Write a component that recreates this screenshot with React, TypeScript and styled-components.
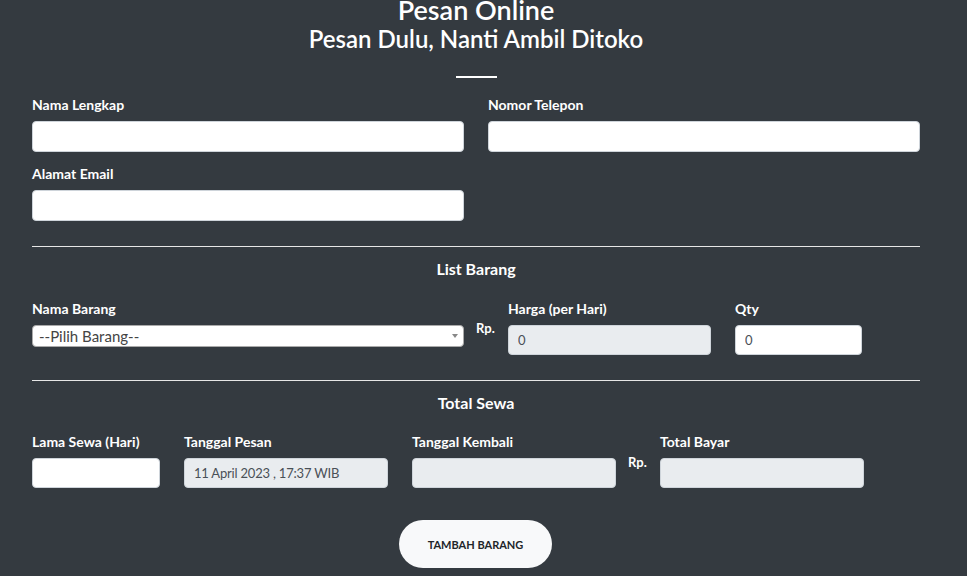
import React from "react";
import styled, { createGlobalStyle } from "styled-components";

const Global = createGlobalStyle`
  html, body { margin: 0; padding: 0; background: #343a40; }
  body { font-family: Lato, "Open Sans", sans-serif; color: #fff; }
  * { box-sizing: border-box; }
`;

const Page = styled.div`
  width: 967px;
  height: 576px;
  overflow: hidden;
  background: #343a40;
  padding-left: 32px;
`;

const Content = styled.div`
  width: 888px;
  display: flex;
  flex-direction: column;
`;

const Header = styled.div`
  display: flex;
  flex-direction: column;
  align-items: center;
  margin-top: -5px;
`;

const Title = styled.h1`
  margin: 0;
  font-size: 27px;
  line-height: 30px;
  font-weight: 600;
`;

const Subtitle = styled.h2`
  margin: 0;
  font-size: 24px;
  line-height: 28px;
  font-weight: 600;
`;

const Underline = styled.div`
  width: 41px;
  height: 2px;
  background: #fff;
  margin-top: 23px;
`;

const Row = styled.div<{ $mt?: number }>`
  display: flex;
  gap: 24px;
  margin-top: ${(p) => p.$mt ?? 0}px;
`;

const Field = styled.div<{ $w: number }>`
  width: ${(p) => p.$w}px;
  display: flex;
  flex-direction: column;
`;

const Label = styled.label`
  font-size: 14px;
  font-weight: 700;
  line-height: 17px;
  height: 17px;
  margin-bottom: 8px;
`;

const Input = styled.input<{ $disabled?: boolean; $h?: number }>`
  width: 100%;
  height: ${(p) => p.$h ?? 31}px;
  border: 1px solid #ced4da;
  border-radius: 4px;
  background: ${(p) => (p.$disabled ? "#e9ecef" : "#fff")};
  font-family: Lato, sans-serif;
  font-size: 13px;
  letter-spacing: -0.2px;
  color: #495057;
  padding: 0 9px;
  outline: none;
`;

const Select = styled.div`
  position: relative;
  width: 100%;
  height: 22px;
  border: 1px solid #aaa;
  border-radius: 4px;
  background: #fff;
  color: #444;
  font-size: 15px;
  line-height: 20px;
  padding-left: 6px;
`;

const Arrow = styled.span`
  position: absolute;
  right: 5px;
  top: 8px;
  width: 0;
  height: 0;
  border-left: 3px solid transparent;
  border-right: 3px solid transparent;
  border-top: 4px solid #888;
`;

const Divider = styled.hr<{ $mt: number }>`
  width: 100%;
  margin: ${(p) => p.$mt}px 0 0;
  border: 0;
  border-top: 1px solid #e6e6e6;
`;

const SectionTitle = styled.h3`
  margin: 12px 0 0;
  text-align: center;
  font-size: 16px;
  font-weight: 700;
  line-height: 20px;
`;

const Rp = styled.div<{ $mt: number }>`
  font-size: 13px;
  font-weight: 700;
  padding-top: ${(p) => p.$mt}px;
  width: 19px;
  margin: 0 -11px 0 -12px;
`;

const ButtonRow = styled.div`
  display: flex;
  justify-content: center;
  margin-top: 32px;
`;

const Button = styled.button`
  width: 153px;
  height: 48px;
  border: none;
  border-radius: 24px;
  background: #f8f9fa;
  color: #212529;
  font-family: Lato, sans-serif;
  font-size: 11px;
  font-weight: 700;
  margin-left: -1px;
`;

export default function App() {
  return (
    <Page>
      <Global />
      <Content>
        <Header>
          <Title>Pesan Online</Title>
          <Subtitle>Pesan Dulu, Nanti Ambil Ditoko</Subtitle>
          <Underline />
        </Header>

        <Row $mt={18}>
          <Field $w={432}>
            <Label>Nama Lengkap</Label>
            <Input />
          </Field>
          <Field $w={432}>
            <Label>Nomor Telepon</Label>
            <Input />
          </Field>
        </Row>
        <Row $mt={13}>
          <Field $w={432}>
            <Label>Alamat Email</Label>
            <Input />
          </Field>
        </Row>

        <Divider $mt={25} />
        <SectionTitle>List Barang</SectionTitle>

        <Row $mt={21}>
          <Field $w={432}>
            <Label>Nama Barang</Label>
            <Select>
              --Pilih Barang--
              <Arrow />
            </Select>
          </Field>
          <Rp $mt={20}>Rp.</Rp>
          <Field $w={203}>
            <Label>Harga (per Hari)</Label>
            <Input $disabled $h={30} value="0" readOnly />
          </Field>
          <Field $w={127}>
            <Label>Qty</Label>
            <Input $h={30} value="0" readOnly />
          </Field>
        </Row>

        <Divider $mt={25} />
        <SectionTitle>Total Sewa</SectionTitle>

        <Row $mt={20}>
          <Field $w={128}>
            <Label>Lama Sewa (Hari)</Label>
            <Input $h={30} />
          </Field>
          <Field $w={204}>
            <Label>Tanggal Pesan</Label>
            <Input $disabled $h={30} value="11 April 2023 , 17:37 WIB" readOnly />
          </Field>
          <Field $w={204}>
            <Label>Tanggal Kembali</Label>
            <Input $disabled $h={30} />
          </Field>
          <Rp $mt={21}>Rp.</Rp>
          <Field $w={204}>
            <Label>Total Bayar</Label>
            <Input $disabled $h={30} />
          </Field>
        </Row>

        <ButtonRow>
          <Button>TAMBAH BARANG</Button>
        </ButtonRow>
      </Content>
    </Page>
  );
}
